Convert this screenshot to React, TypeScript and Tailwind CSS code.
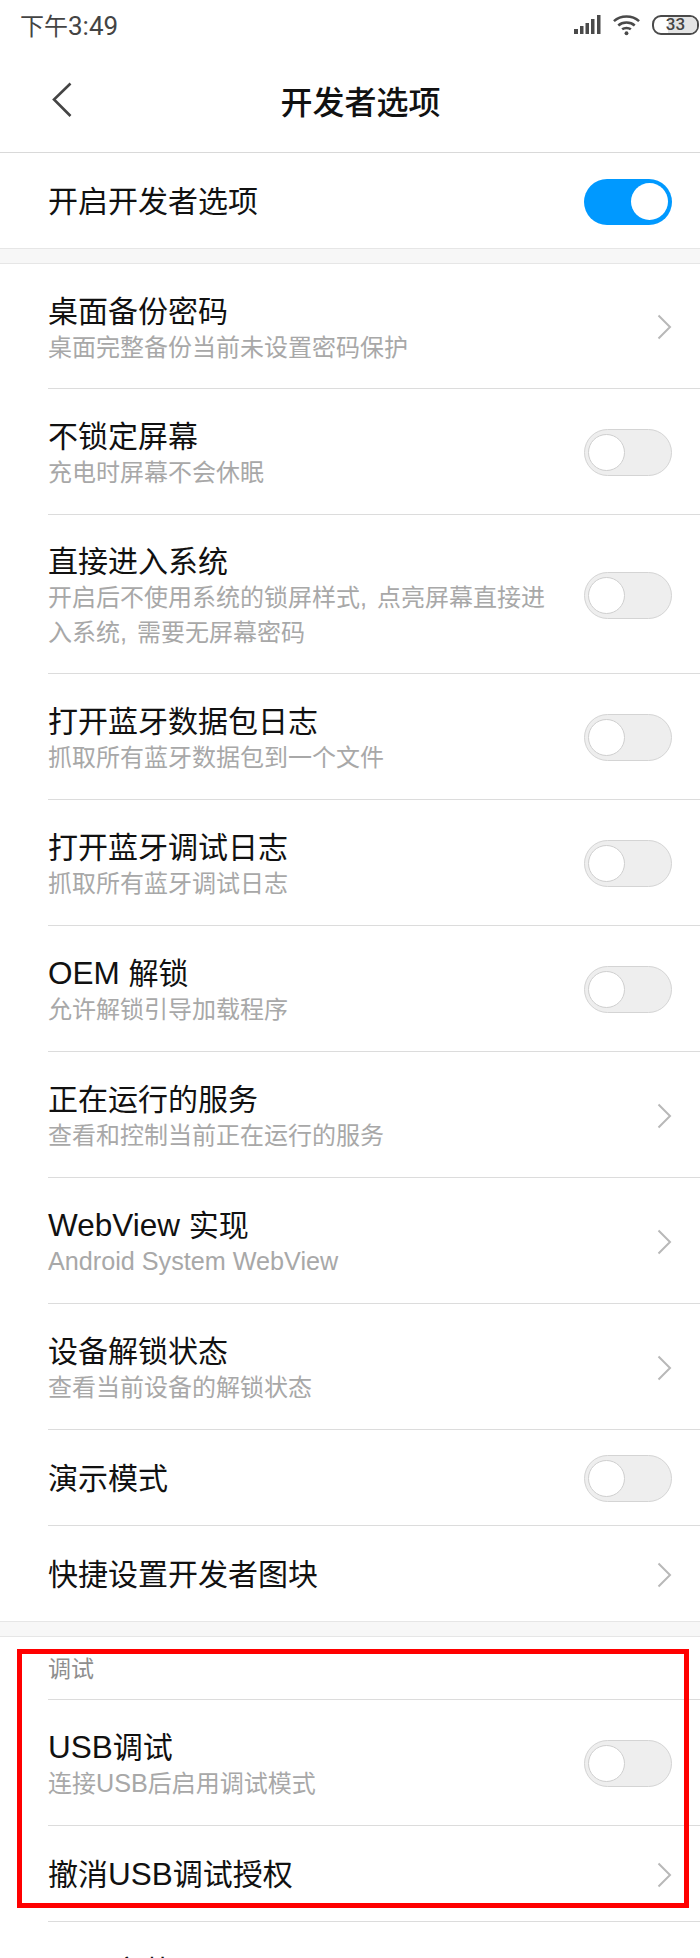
import React from "react";

function Toggle({ on = false }: { on?: boolean }) {
  if (on) {
    return (
      <div className="mt-[2px] flex h-[46px] w-[88px] shrink-0 items-center justify-end rounded-full bg-[#0099ff] pr-[4px]">
        <div className="h-[37px] w-[37px] rounded-full bg-white" />
      </div>
    );
  }
  return (
    <div className="mt-[2px] flex h-[47px] w-[88px] shrink-0 items-center rounded-full border border-[#d4d4d4] bg-[#eeeeee] pl-[3px]">
      <div className="h-[37px] w-[37px] rounded-full border border-[#cfcfcf] bg-white" />
    </div>
  );
}

function Chevron() {
  return (
    <svg width="15" height="26" viewBox="0 0 15 26" className="mt-[2px] shrink-0" fill="none">
      <path d="M1.5 1.5 L13 13 L1.5 24.5" stroke="#b8b8b8" strokeWidth="2" />
    </svg>
  );
}

/* Latin runs are set in an Arial-width face, slightly larger than the CJK around them */
function T({ children }: { children: React.ReactNode }) {
  return <span className="font-['Liberation_Sans'] text-[31.5px] leading-none">{children}</span>;
}
function S({ children }: { children: React.ReactNode }) {
  return <span className="font-['Liberation_Sans'] text-[25.2px] leading-none">{children}</span>;
}
function Comma() {
  return <span className="mr-[10px] font-['Liberation_Sans'] text-[25.2px] leading-none">,</span>;
}

type Row = { t: React.ReactNode; s?: React.ReactNode; h: string; k: "on" | "off" | "go"; last?: boolean };

function Item({ t, s, h, k, last }: Row) {
  return (
    <div className={`ml-[48px] flex items-center justify-between pr-[28px] ${h} ${last ? "" : "border-b border-[#dcdcdc]"}`}>
      <div className={`flex w-[510px] flex-col ${s ? "pt-[5px]" : "pt-[2px]"}`}>
        <div className="text-[30px] leading-[40px] text-[#111111]">{t}</div>
        {s && <div className="-mt-[1px] text-[24px] leading-[35px] text-[#a8a8a8]">{s}</div>}
      </div>
      {k === "go" ? <Chevron /> : <Toggle on={k === "on"} />}
    </div>
  );
}

const h126 = "h-[126px]";

function Band() {
  return <div className="h-[16px] border-y border-[#e6e6e6] bg-[#f7f7f7]" />;
}

export default function App() {
  return (
    <div
      className="relative h-[1958px] w-[700px] overflow-hidden bg-white"
      style={{ fontFamily: 'Roboto, "Noto Sans CJK SC", sans-serif' }}
    >
      {/* status bar */}
      <div className="flex h-[53px] items-center justify-between pl-[20px] pr-[1px]">
        <span className="text-[24px] leading-[30px] text-[#444444]">
          下午<span className="text-[26px]">3:49</span>
        </span>
        <div className="-mt-[4px] flex items-center gap-[11px]">
          <svg width="27" height="20" viewBox="0 0 27 20" fill="#4a4a4a">
            <rect x="0" y="14" width="4" height="5" />
            <rect x="6" y="11" width="3.5" height="8" />
            <rect x="11.5" y="8" width="3.5" height="11" />
            <rect x="17" y="4" width="3.5" height="15" />
            <rect x="23" y="0" width="3.5" height="19" />
          </svg>
          <svg width="29" height="22" viewBox="0 0 30 22" fill="none" stroke="#4a4a4a" strokeWidth="2.6">
            <path d="M2 7 C9 0.5 21 0.5 28 7" />
            <path d="M6.5 11.5 C11 7.5 19 7.5 23.5 11.5" />
            <path d="M10.5 15.5 C13 13.5 17 13.5 19.5 15.5" />
            <circle cx="15" cy="19.5" r="2" fill="#4a4a4a" stroke="none" />
          </svg>
          <div className="relative flex h-[20px] w-[47px] items-center justify-center overflow-hidden rounded-[9px] border-2 border-[#4a4a4a]">
            <div className="absolute inset-y-0 right-0 w-[67%] bg-[#e4e4e4]" />
            <span className="relative text-[17px] font-medium leading-none text-[#444444]">33</span>
          </div>
        </div>
      </div>

      {/* title bar */}
      <div className="relative flex h-[100px] items-center justify-center border-b border-[#d9d9d9] pl-[21px]">
        <svg width="22" height="36" viewBox="0 0 22 36" fill="none" className="absolute left-[51px] top-[29px]">
          <path d="M19.5 1.5 L3 17.5 L19.5 34" stroke="#444444" strokeWidth="2.6" />
        </svg>
        <span className="text-[32px] font-medium leading-[40px] text-[#111111]">开发者选项</span>
      </div>

      <div className="flex h-[95px] items-center justify-between pl-[48px] pr-[28px]">
        <span className="pt-[2px] text-[30px] leading-[40px] text-[#111111]">开启开发者选项</span>
        <Toggle on />
      </div>

      <Band />

      <Item t="桌面备份密码" s="桌面完整备份当前未设置密码保护" h="h-[125px]" k="go" />
      <Item t="不锁定屏幕" s="充电时屏幕不会休眠" h={h126} k="off" />
      <Item
        t="直接进入系统"
        s={<>开启后不使用系统的锁屏样式<Comma />点亮屏幕直接进入系统<Comma />需要无屏幕密码</>}
        h="h-[159px]"
        k="off"
      />
      <Item t="打开蓝牙数据包日志" s="抓取所有蓝牙数据包到一个文件" h={h126} k="off" />
      <Item t="打开蓝牙调试日志" s="抓取所有蓝牙调试日志" h={h126} k="off" />
      <Item t={<><T>OEM </T>解锁</>} s="允许解锁引导加载程序" h={h126} k="off" />
      <Item t="正在运行的服务" s="查看和控制当前正在运行的服务" h={h126} k="go" />
      <Item t={<><T>WebView </T>实现</>} s={<S>Android System WebView</S>} h={h126} k="go" />
      <Item t="设备解锁状态" s="查看当前设备的解锁状态" h={h126} k="go" />
      <Item t="演示模式" h="h-[96px]" k="off" />
      <Item t="快捷设置开发者图块" h="h-[95px]" k="go" last />

      <Band />

      <div className="ml-[48px] h-[63px] border-b border-[#dcdcdc] pt-[19px] text-[23px] leading-[28px] text-[#8e8e8e]">调试</div>
      <Item t={<><T>USB</T>调试</>} s={<>连接<S>USB</S>后启用调试模式</>} h={h126} k="off" />
      <Item t={<>撤消<T>USB</T>调试授权</>} h="h-[96px]" k="go" />
      <div className="ml-[48px] pt-[30px] text-[30px] leading-[40px] text-[#111111]"><T>USB</T>安装</div>

      {/* annotation */}
      <div className="absolute left-[17px] top-[1649px] h-[259px] w-[672px] border-[5px] border-[#ff0000]" />
    </div>
  );
}
